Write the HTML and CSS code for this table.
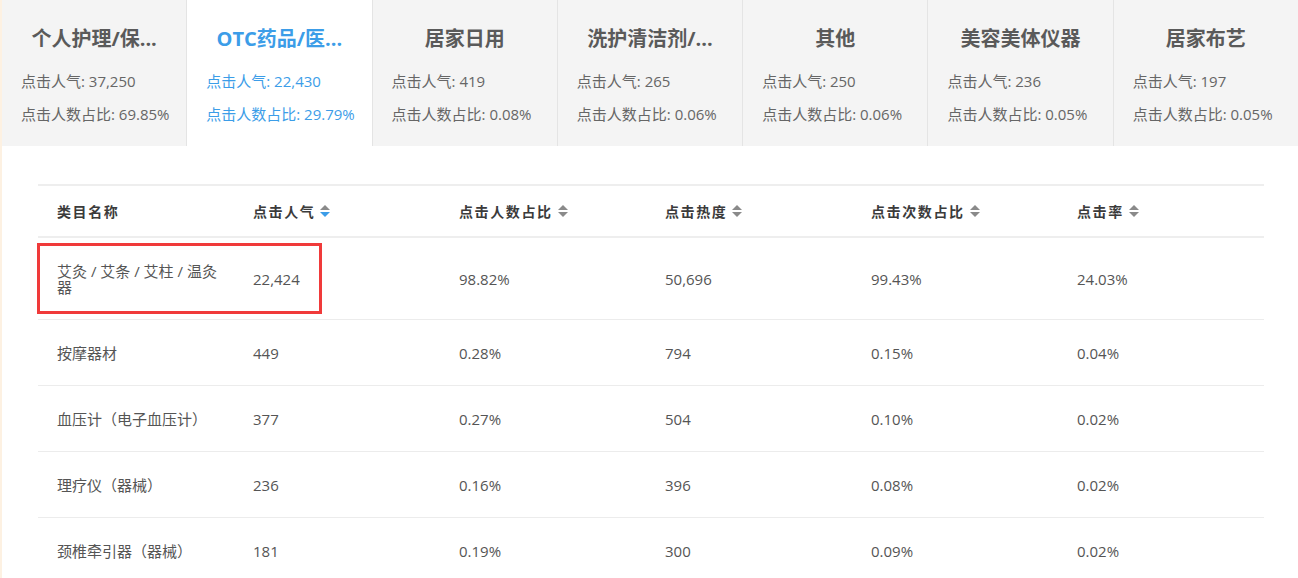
FILE: index.html
```html
<!DOCTYPE html>
<html lang="zh-CN">
<head>
<meta charset="utf-8">
<title>类目点击</title>
<link rel="stylesheet" href="styles.css">
</head>
<body>
<div class="page">
  <div class="tabs">
    <div class="tab">
      <div class="tab-title">个人护理/保...</div>
      <div class="tab-stat">点击人气: 37,250</div>
      <div class="tab-stat">点击人数占比: 69.85%</div>
    </div>
    <div class="tab active">
      <div class="tab-title">OTC药品/医...</div>
      <div class="tab-stat">点击人气: 22,430</div>
      <div class="tab-stat">点击人数占比: 29.79%</div>
    </div>
    <div class="tab">
      <div class="tab-title">居家日用</div>
      <div class="tab-stat">点击人气: 419</div>
      <div class="tab-stat">点击人数占比: 0.08%</div>
    </div>
    <div class="tab">
      <div class="tab-title">洗护清洁剂/...</div>
      <div class="tab-stat">点击人气: 265</div>
      <div class="tab-stat">点击人数占比: 0.06%</div>
    </div>
    <div class="tab">
      <div class="tab-title">其他</div>
      <div class="tab-stat">点击人气: 250</div>
      <div class="tab-stat">点击人数占比: 0.06%</div>
    </div>
    <div class="tab">
      <div class="tab-title">美容美体仪器</div>
      <div class="tab-stat">点击人气: 236</div>
      <div class="tab-stat">点击人数占比: 0.05%</div>
    </div>
    <div class="tab">
      <div class="tab-title">居家布艺</div>
      <div class="tab-stat">点击人气: 197</div>
      <div class="tab-stat">点击人数占比: 0.05%</div>
    </div>
  </div>

  <div class="content">
    <div class="table-wrap">
      <table class="data-table">
        <colgroup>
          <col class="col-name">
          <col class="col-num"><col class="col-num"><col class="col-num"><col class="col-num"><col class="col-num">
        </colgroup>
        <thead>
          <tr>
            <th>类目名称</th>
            <th><span class="th-inner">点击人气<span class="sort active-down"><i class="up"></i><i class="down"></i></span></span></th>
            <th><span class="th-inner">点击人数占比<span class="sort"><i class="up"></i><i class="down"></i></span></span></th>
            <th><span class="th-inner">点击热度<span class="sort"><i class="up"></i><i class="down"></i></span></span></th>
            <th><span class="th-inner">点击次数占比<span class="sort"><i class="up"></i><i class="down"></i></span></span></th>
            <th><span class="th-inner">点击率<span class="sort"><i class="up"></i><i class="down"></i></span></span></th>
          </tr>
        </thead>
        <tbody>
          <tr><td>艾灸 / 艾条 / 艾柱 / 温灸器</td><td>22,424</td><td>98.82%</td><td>50,696</td><td>99.43%</td><td>24.03%</td></tr>
          <tr><td>按摩器材</td><td>449</td><td>0.28%</td><td>794</td><td>0.15%</td><td>0.04%</td></tr>
          <tr><td>血压计（电子血压计）</td><td>377</td><td>0.27%</td><td>504</td><td>0.10%</td><td>0.02%</td></tr>
          <tr><td>理疗仪（器械）</td><td>236</td><td>0.16%</td><td>396</td><td>0.08%</td><td>0.02%</td></tr>
          <tr><td>颈椎牵引器（器械）</td><td>181</td><td>0.19%</td><td>300</td><td>0.09%</td><td>0.02%</td></tr>
        </tbody>
      </table>
      <div class="highlight-box"></div>
    </div>
  </div>
</div>
</body>
</html>
```
FILE: styles.css
```css
* { box-sizing: border-box; }

html, body {
  margin: 0;
  padding: 0;
  background: #fff;
}

body {
  font-family: "Open Sans", "Noto Sans CJK SC", sans-serif;
  color: #555;
  font-size: 15px;
  overflow: hidden;
}

.page {
  border-left: 2px solid #fdf1e2;
  min-height: 578px;
}

.tabs {
  display: flex;
  height: 146px;
  background: #f4f4f4;
}

.tab {
  flex: 1 1 0;
  min-width: 0;
  padding: 25px 0 0 19px;
  border-right: 1px solid #e4e4e4;
  background: #f4f4f4;
  color: #666;
}

.tab:last-child { border-right: none; }

.tab.active {
  background: #fff;
  color: #3c9de8;
}

.tab-title {
  font-size: 20px;
  font-weight: 700;
  line-height: 28px;
  text-align: center;
  color: #5a5a5a;
  margin: 0 0 12px -19px;
  white-space: nowrap;
}

.tab.active .tab-title { color: #3c9de8; }

.tab-stat {
  font-size: 15px;
  line-height: 33px;
  white-space: nowrap;
}

.content {
  padding: 38px 34px 0 36px;
}

.table-wrap {
  position: relative;
}

.data-table {
  width: 100%;
  border-collapse: collapse;
  table-layout: fixed;
  border-top: 2px solid #eeeeee;
}

.col-name { width: 196px; }

.data-table th {
  text-align: left;
  font-weight: 700;
  font-size: 14px;
  letter-spacing: 1.6px;
  color: #3b3b3b;
  height: 52px;
  padding: 0 10px 0 19px;
  border-bottom: 2px solid #eeeeee;
  vertical-align: middle;
  font-family: "Noto Sans CJK SC", sans-serif;
}

.th-inner {
  display: inline-flex;
  align-items: center;
}

.sort {
  display: inline-flex;
  flex-direction: column;
  gap: 2px;
  margin-left: 5px;
}

.sort i {
  display: block;
  width: 0;
  height: 0;
  border-left: 5px solid transparent;
  border-right: 5px solid transparent;
}

.sort .up { border-bottom: 5px solid #8a8a8a; }
.sort .down { border-top: 5px solid #8a8a8a; }
.sort.active-down .down { border-top-color: #3c9de8; }

.data-table td {
  padding: 25px 10px 24px 19px;
  line-height: 16px;
  font-size: 15px;
  color: #555;
  border-bottom: 1px solid #ececec;
  vertical-align: middle;
}

.highlight-box {
  position: absolute;
  left: -1px;
  top: 59px;
  width: 285px;
  height: 71px;
  border: 3px solid #f03a3a;
  pointer-events: none;
}
```
